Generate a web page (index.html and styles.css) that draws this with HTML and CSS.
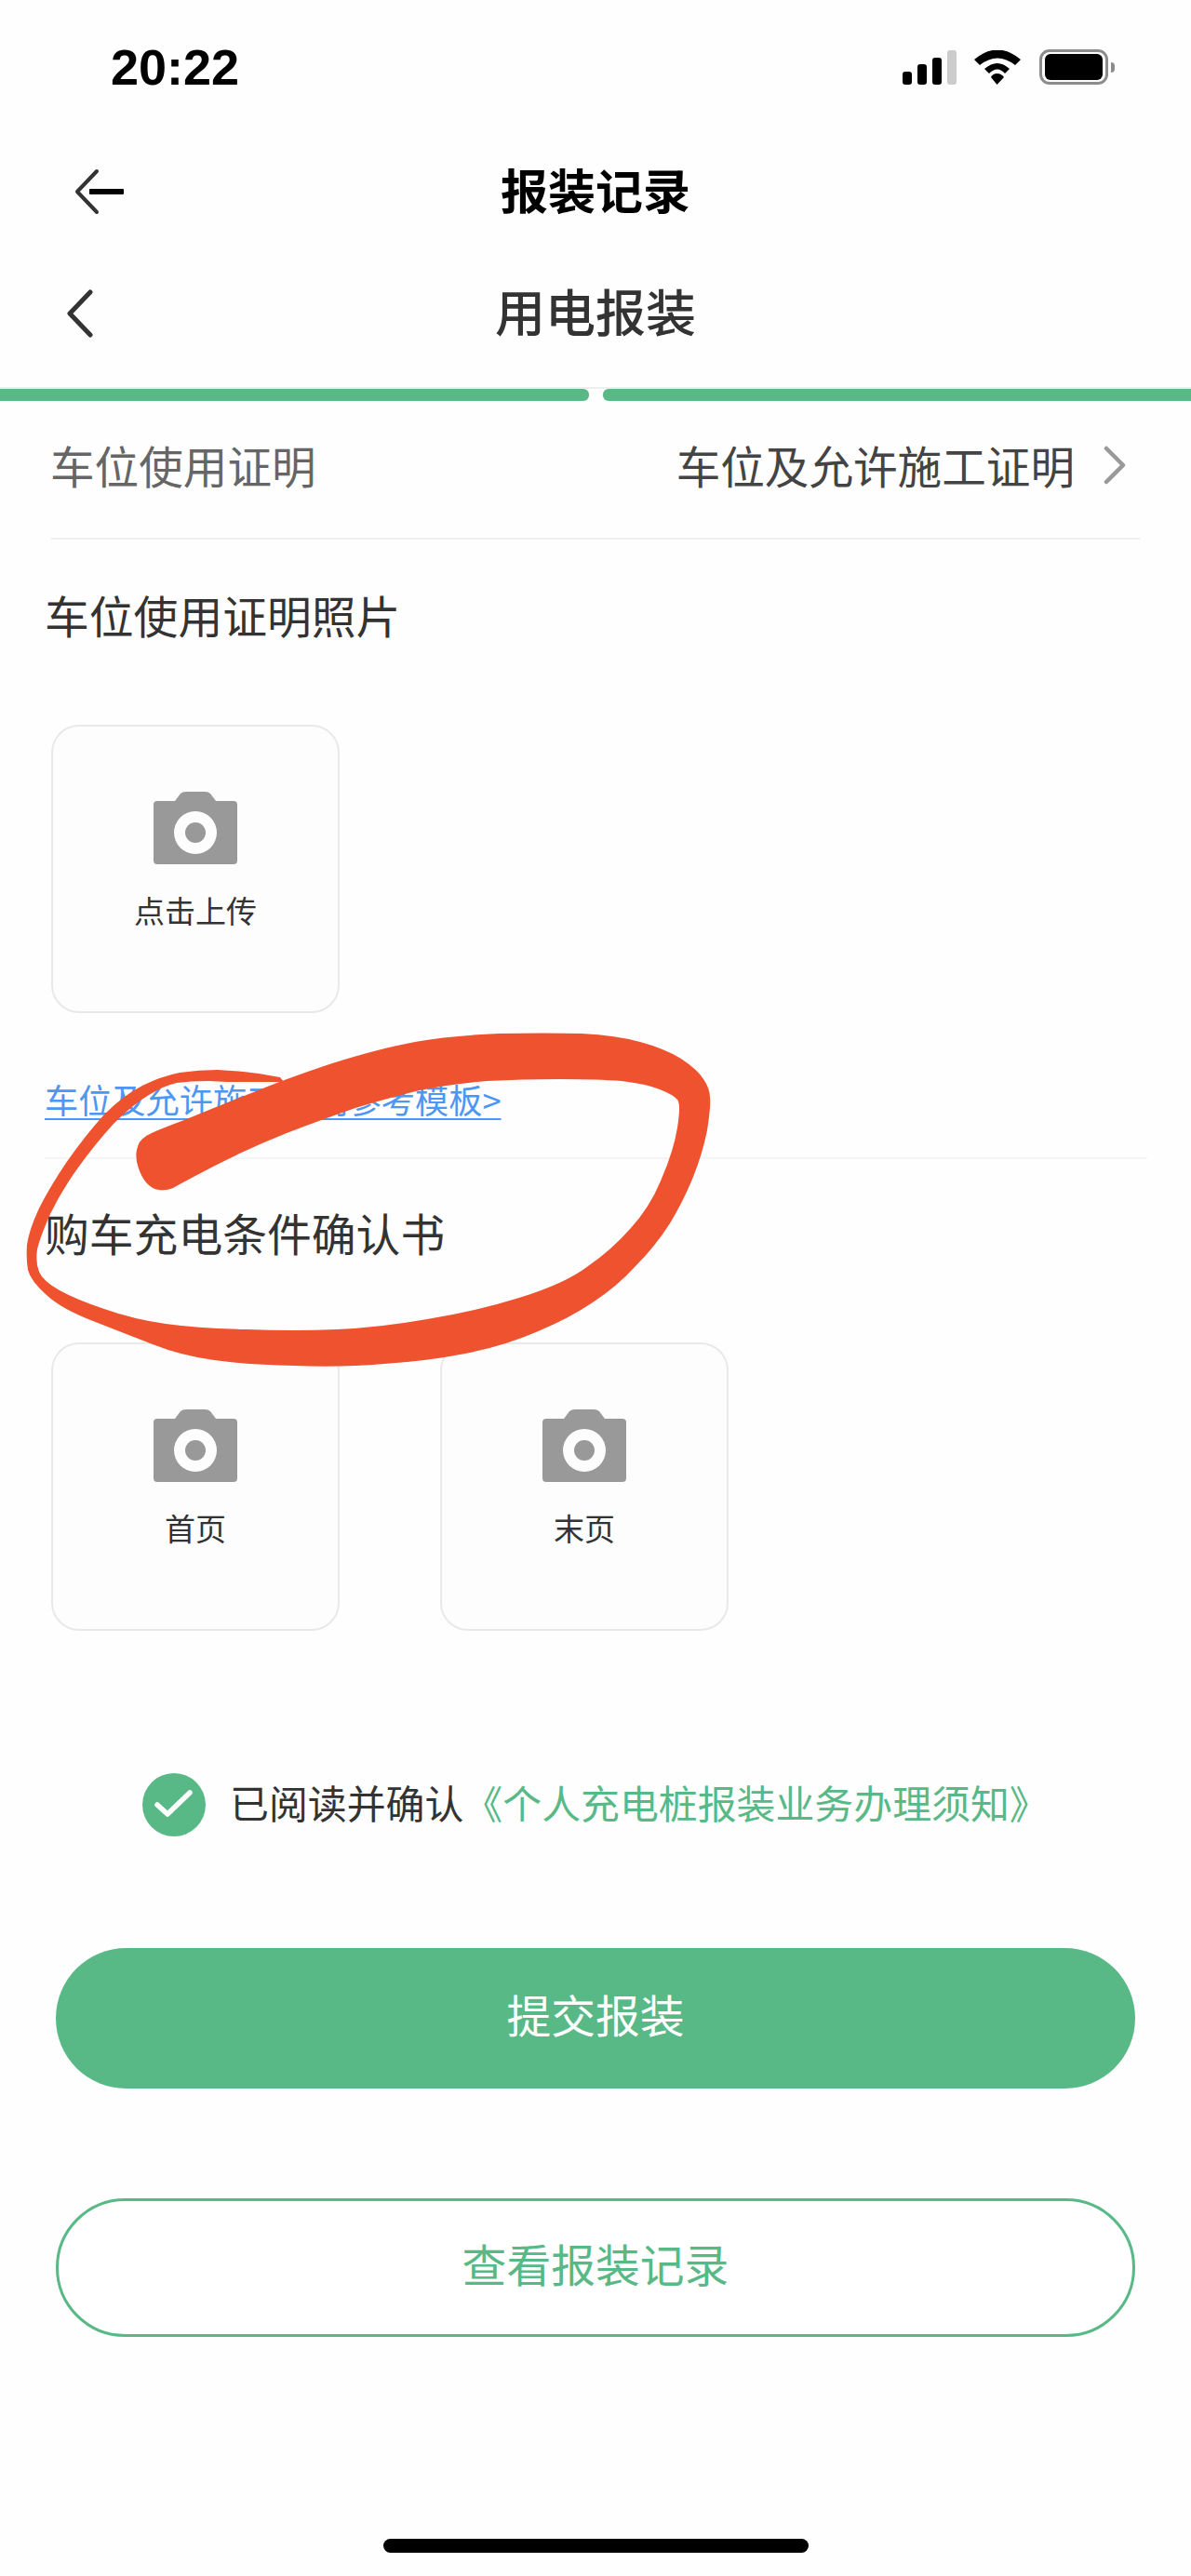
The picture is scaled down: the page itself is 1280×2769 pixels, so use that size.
FILE: index.html
```html
<!DOCTYPE html>
<html lang="zh-CN">
<head>
<meta charset="utf-8">
<title>用电报装</title>
<link rel="stylesheet" href="styles.css">
</head>
<body>
<div class="screen">
  <header class="status">
    <span class="time">20:22</span>
    <div class="status-icons">
      <div class="signal"><i class="b1"></i><i class="b2"></i><i class="b3"></i><i class="b4"></i></div>
      <svg class="wifi" viewBox="0 0 50 37"><path d="M0 10Q25 -11 50 10L44 16Q25 1 6 16Z"/><path d="M11 20Q25 8 38 20L33 25Q25 16 16 25Z"/><path d="M24.500 25Q29 25 32 29L24.500 37L18 29Q20 25 24.500 25Z"/></svg>
      <div class="battery"><div class="battery-fill"></div></div>
      <div class="battery-nub"></div>
    </div>
  </header>
  <nav class="nav nav-top">
    <svg class="arrow" viewBox="0 0 56 50"><polyline class="arrow-head" points="24,3 3,25 24,47"/><rect x="16" y="22" width="37" height="6" rx="1"/></svg>
    <h1 class="title-top">报装记录</h1>
  </nav>
  <nav class="nav nav-sub">
    <svg class="chev-back" viewBox="0 0 30 52"><polyline points="26,3 4,26 26,49"/></svg>
    <h2 class="title-sub">用电报装</h2>
  </nav>
  <div class="progress"><div class="seg seg-l"></div><div class="seg seg-r"></div></div>
  <div class="row">
    <span class="row-label">车位使用证明</span>
    <div class="row-value"><span>车位及允许施工证明</span>
      <svg class="chev" viewBox="0 0 26 42"><polyline points="4,3 22,21 4,39"/></svg>
    </div>
  </div>
  <h3 class="sec-title sec-first">车位使用证明照片</h3>
  <div class="cards">
    <div class="card">
      <svg class="cam" viewBox="0 0 90 78"><path d="M4 10H23L29 2Q31 0 35 0H55Q59 0 61 2L67 10H86Q90 10 90 14V74Q90 78 86 78H4Q0 78 0 74V14Q0 10 4 10Z"/><circle class="lens-o" cx="45" cy="44" r="23"/><circle cx="45" cy="44" r="11"/></svg>
      <span class="card-label">点击上传</span>
    </div>
  </div>
  <div class="link-wrap"><a class="link">车位及允许施工证明参考模板&gt;</a></div>
  <h3 class="sec-title">购车充电条件确认书</h3>
  <div class="cards">
    <div class="card">
      <svg class="cam" viewBox="0 0 90 78"><path d="M4 10H23L29 2Q31 0 35 0H55Q59 0 61 2L67 10H86Q90 10 90 14V74Q90 78 86 78H4Q0 78 0 74V14Q0 10 4 10Z"/><circle class="lens-o" cx="45" cy="44" r="23"/><circle cx="45" cy="44" r="11"/></svg>
      <span class="card-label">首页</span>
    </div>
    <div class="card">
      <svg class="cam" viewBox="0 0 90 78"><path d="M4 10H23L29 2Q31 0 35 0H55Q59 0 61 2L67 10H86Q90 10 90 14V74Q90 78 86 78H4Q0 78 0 74V14Q0 10 4 10Z"/><circle class="lens-o" cx="45" cy="44" r="23"/><circle cx="45" cy="44" r="11"/></svg>
      <span class="card-label">末页</span>
    </div>
  </div>
  <div class="agree">
    <svg class="check" viewBox="0 0 68 68"><circle cx="34" cy="34" r="34"/><polyline points="16,34 27,44 51,21"/></svg>
    <p class="agree-text">已阅读并确认<span class="agree-link">《个人充电桩报装业务办理须知》</span></p>
  </div>
  <button class="btn btn-primary">提交报装</button>
  <button class="btn btn-outline">查看报装记录</button>
  <div class="home"></div>
  <svg class="scribble" viewBox="0 0 1280 2769">
    <path d="M149 1256Q145 1245 147 1236Q149 1226 156 1222Q160 1218 198 1204Q234 1189 270 1175Q306 1160 357 1143Q408 1127 446 1120Q485 1113 536 1111Q587 1110 625 1111Q663 1113 688 1120Q714 1127 732 1138Q750 1150 756 1160Q763 1170 763 1180Q764 1190 760 1215Q755 1240 745 1265Q735 1290 720 1315Q704 1340 683 1361Q663 1383 637 1400Q612 1417 576 1432Q541 1447 500 1455Q459 1463 413 1466Q367 1470 316 1468Q265 1467 230 1462Q194 1457 164 1445Q133 1433 100 1420Q66 1407 50 1392Q33 1377 30 1365Q28 1353 29 1338Q31 1323 41 1301Q51 1280 71 1250Q92 1220 112 1198Q133 1177 153 1167Q173 1157 193 1153Q214 1150 234 1150Q255 1151 278 1154L301 1158L305 1163L245 1163L224 1162Q204 1162 190 1164Q176 1167 160 1177Q143 1187 122 1208Q102 1230 84 1255Q66 1280 54 1305Q43 1330 40 1343Q38 1357 42 1367Q46 1377 64 1387Q82 1397 112 1407Q143 1418 178 1423Q214 1428 265 1429Q316 1431 362 1429Q408 1427 459 1418Q510 1410 558 1395Q607 1380 632 1361Q658 1343 678 1320Q699 1297 711 1267Q724 1237 728 1212Q732 1187 728 1182Q724 1177 709 1171Q694 1165 668 1162Q643 1160 602 1160Q561 1160 523 1162Q485 1165 451 1172Q418 1180 382 1191Q347 1203 308 1218Q270 1233 229 1254Q189 1275 186 1277Q179 1280 171 1279Q163 1278 157 1271Q152 1265 149 1256Z"/>
  </svg>
</div>
</body>
</html>
```

FILE: styles.css
```css
* { box-sizing: border-box; }
html, body { margin: 0; padding: 0; background: #fff; }
body { font-family: "Noto Sans CJK SC", "Noto Sans", sans-serif; color: #333; }
h1, h2, h3, p { margin: 0; font-weight: 400; }

.screen { position: relative; width: 1280px; height: 2769px; background: #fefefe; display: flex; flex-direction: column; overflow: hidden; }

.status { height: 141px; display: flex; justify-content: space-between; align-items: flex-start; padding: 52px 82px 0 119px; }
.time { font-family: "Liberation Sans", sans-serif; font-weight: 700; font-size: 54px; line-height: 40px; color: #000; }
.status-icons { display: flex; align-items: flex-start; margin-top: 1px; }
.signal { display: flex; align-items: flex-end; gap: 6px; height: 37px; margin-top: 1px; }
.signal i { display: block; width: 10px; background: #000; border-radius: 3px; }
.signal .b1 { height: 14px; }
.signal .b2 { height: 22px; }
.signal .b3 { height: 29px; }
.signal .b4 { height: 37px; background: #ccc; }
.wifi { width: 50px; height: 37px; margin: 1px 20px 0 19px; fill: #000; display: block; }
.battery { width: 74px; height: 38px; border: 3px solid #8c8c8c; border-radius: 11px; padding: 2px 3px; }
.battery-fill { height: 100%; background: #000; border-radius: 6px; }
.battery-nub { width: 4px; height: 11px; margin: 14px 0 0 3px; background: #8c8c8c; border-radius: 0 4px 4px 0; }

.nav { display: flex; align-items: center; position: relative; justify-content: center; padding-bottom: 6px; }
.nav-top { height: 130px; }
.nav-sub { height: 132px; margin-bottom: 13px; }
.arrow { position: absolute; left: 80px; top: 40px; width: 56px; height: 50px; }
.arrow-head { fill: none; stroke: #333; stroke-width: 4; stroke-linecap: round; stroke-linejoin: round; }
.title-top { font-size: 51px; font-weight: 700; color: #000; line-height: 60px; }
.chev-back { position: absolute; left: 71px; top: 40px; width: 30px; height: 52px; fill: none; stroke: #333; stroke-width: 5; stroke-linecap: round; stroke-linejoin: round; }
.title-sub { font-size: 54px; font-weight: 500; color: #333; line-height: 60px; }

.progress { display: flex; justify-content: space-between; height: 15px; border-top: 2px solid #eee; }
.seg { height: 13px; background: #58b986; }
.seg-l { width: 633px; border-radius: 0 6px 6px 0; }
.seg-r { width: 632px; border-radius: 6px 0 0 6px; }

.row { height: 149px; margin: 0 55px; padding: 0 14px 9px 0; display: flex; justify-content: space-between; align-items: center; border-bottom: 2px solid #eee; font-size: 47.600px; line-height: 60px; }
.row-label { color: #666; margin-left: -1px; }
.row-value { display: flex; align-items: center; gap: 30px; color: #444; }
.chev { width: 26px; height: 42px; fill: none; stroke: #999; stroke-width: 4.500; stroke-linecap: round; stroke-linejoin: round; }

.sec-title { margin: 49px 0 2px 48px; font-size: 47.800px; line-height: 60px; color: #333; }
.sec-first { margin-top: 51px; }
.cards { display: flex; gap: 108px; margin: 86px 0 0 55px; }
.card { width: 310px; height: 310px; background: #fdfdfd; border: 2px solid #e9e9e9; border-radius: 30px; padding-top: 70px; display: flex; flex-direction: column; align-items: center; }
.cam { width: 90px; height: 78px; fill: #999; display: block; }
.lens-o { fill: #fdfdfd; }
.card-label { margin-top: 29px; font-size: 33px; line-height: 40px; color: #333; }

.link-wrap { margin: 70px 47px 0 48px; padding-bottom: 41px; border-bottom: 2px solid #f5f5f5; font-size: 36.200px; line-height: 44px; }
.link { color: #4f96f2; text-decoration: underline; text-decoration-thickness: 2px; text-underline-offset: 5px; }

.agree { display: flex; align-items: center; gap: 26px; height: 68px; margin: 153px 0 0 153px; }
.check { width: 68px; height: 68px; fill: #58b986; stroke: none; flex: none; }
.check polyline { fill: none; stroke: #fff; stroke-width: 5.500; stroke-linecap: round; stroke-linejoin: round; }
.agree-text { font-size: 41.900px; line-height: 60px; color: #333; white-space: nowrap; padding-bottom: 6px; }
.agree-link { color: #58b986; }

.btn { display: block; width: 1160px; margin: 119px 0 0 60px; border-radius: 76px; font-family: inherit; font-size: 47.800px; line-height: 60px; padding: 0 0 10px; }
.btn-primary { height: 151px; margin-top: 120px; background: #58b986; border: 0; color: #fff; }
.btn-outline { height: 149px; margin-top: 118px; background: #fff; border: 3px solid #58b986; color: #58b986; }

.home { width: 457px; height: 15px; margin: 217px 0 0 412px; background: #000; border-radius: 8px; }

.scribble { position: absolute; left: 0; top: 0; width: 1280px; height: 2769px; pointer-events: none; }
.scribble path { fill: #ee522f; }
```
